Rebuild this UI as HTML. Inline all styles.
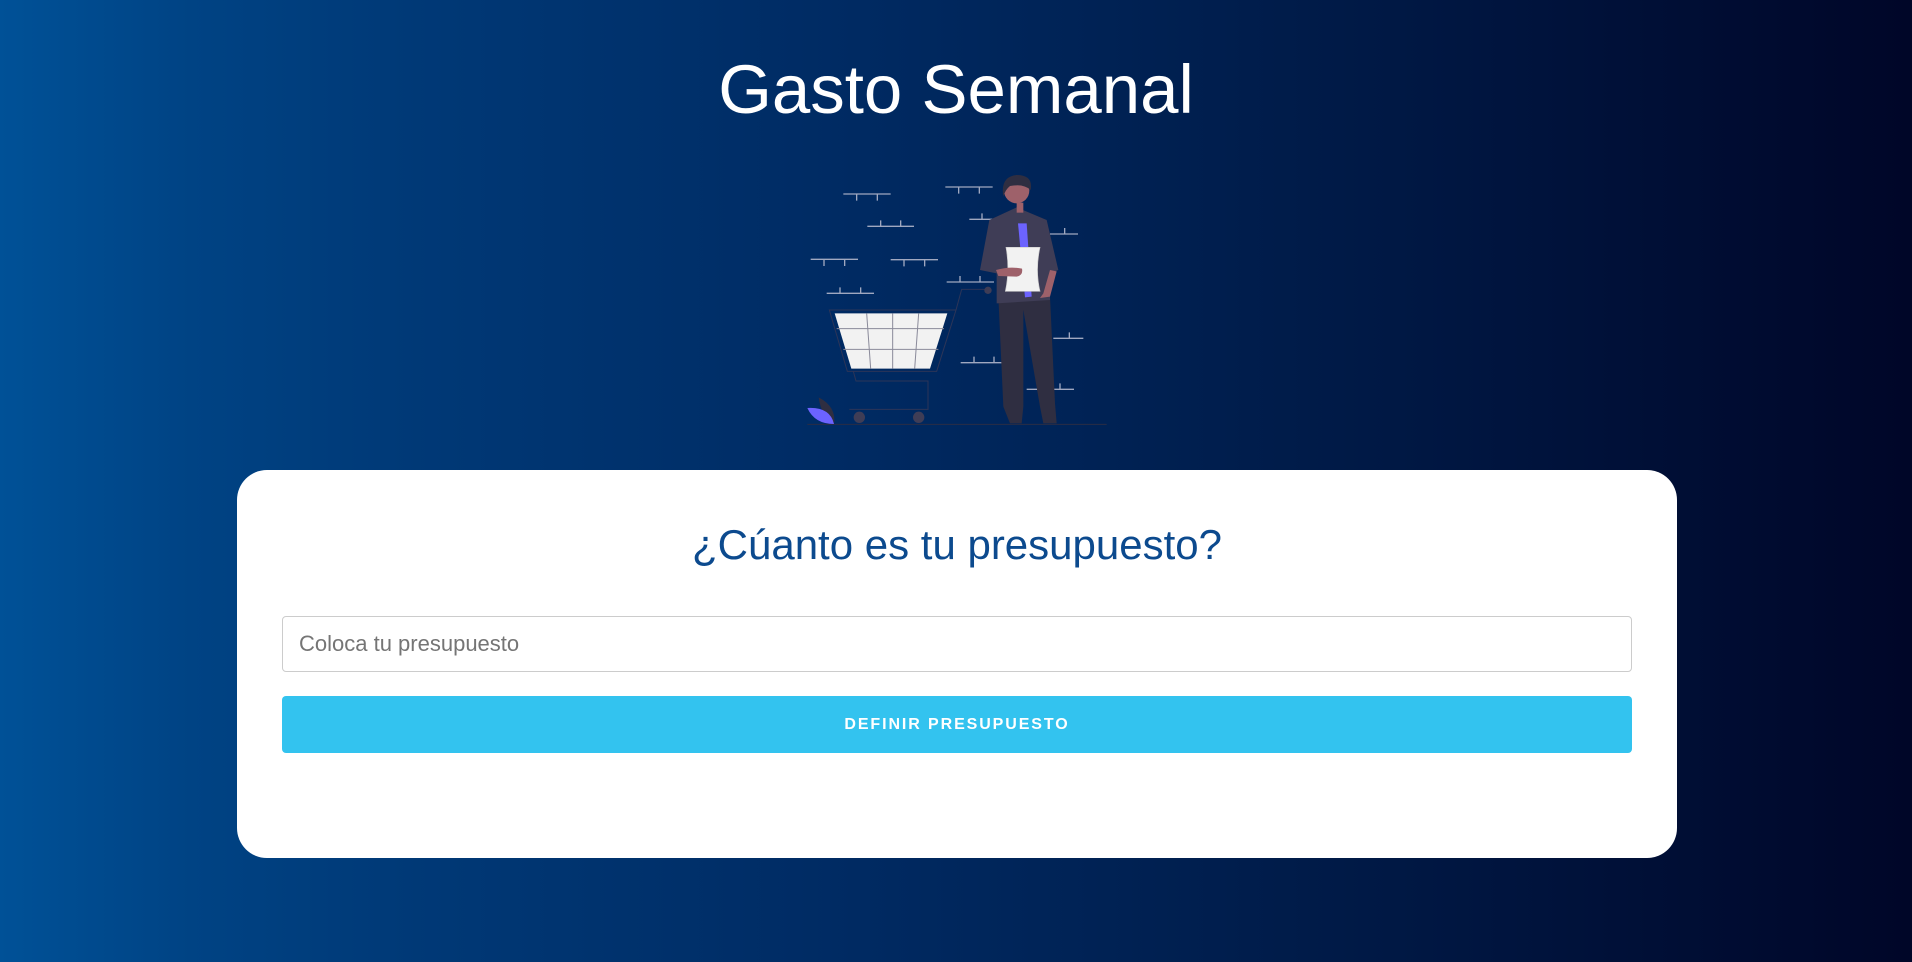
<!DOCTYPE html>
<html><head><meta charset="utf-8"><style>
html,body{margin:0;padding:0;width:1912px;height:962px;overflow:hidden}
body{background:linear-gradient(90deg,#005197 0%,#004384 10%,#003a78 20%,#002a62 45%,#001a47 70%,#000628 100%);font-family:"Liberation Sans",Arial,sans-serif;position:relative}
h1{position:absolute;left:0;right:0;top:42px;margin:0;text-align:center;color:#fff;font-weight:400;font-size:69px;line-height:96px}
svg.il{position:absolute;left:790px;top:160px}
.card{position:absolute;left:237px;top:470px;width:1440px;height:388px;background:#fff;border-radius:30px}
.card h2{margin:0;position:absolute;top:47px;left:0;right:0;text-align:center;color:#0c4a8e;font-weight:400;font-size:42px;line-height:56px}
.inp{position:absolute;left:45px;top:146px;width:1348px;height:54px;border:1px solid #ccc;border-radius:4px;box-sizing:content-box}
.inp span{position:absolute;left:16px;top:14px;font-size:22px;color:#757575}
.btn{position:absolute;left:45px;top:226px;width:1350px;height:57px;background:#33c3ef;border-radius:4px;color:#fff;font-weight:700;font-size:16px;letter-spacing:1.9px;text-align:center;line-height:57px}
</style></head><body>
<h1>Gasto Semanal</h1>
<svg class="il" width="340" height="280" viewBox="0 0 1020 840">
<g stroke="#a0a8c0" stroke-width="4" fill="none">
<path d="M160 102H302M200 102v20M262 102v20"/>
<path d="M232 199H372M272 199v-18M332 199v-18"/>
<path d="M62 298H204M102 298v20M164 298v20"/>
<path d="M302 299H444M342 299v20M404 299v20"/>
<path d="M110 400H252M150 400v-18M212 400v-18"/>
<path d="M466 81H608M506 81v20M568 81v20"/>
<path d="M538 178H610M576 178v-18"/>
<path d="M780 222H864M824 222v-18"/>
<path d="M470 366H612M510 366v-18M570 366v-18"/>
<path d="M790 535H880M838 535v-18"/>
<path d="M512 608H640M552 608v-18M612 608v-18"/>
<path d="M710 688H852M810 688v-18"/>
</g>
<path d="M52 793H950" stroke="#2a2d45" stroke-width="3"/>
<g stroke="#2c3558" stroke-width="3" fill="none">
<path d="M118 450H498L440 634H172Z"/>
<path d="M498 450L515 388H594"/>
<path d="M190 634L198 663H414V748H178"/>
</g>
<path d="M134 460H472L420 626H184Z" fill="#f2f2f2"/>
<g stroke="#8a8a9a" stroke-width="3"><path d="M140 506H462M160 568H445M230 460L242 626M308 460V626M386 460L374 626"/></g>
<circle cx="594" cy="391" r="11" fill="#3f3d56"/>
<circle cx="208" cy="772" r="17" fill="#3f3d56"/><circle cx="386" cy="772" r="17" fill="#3f3d56"/>
<path d="M86 712Q140 740 132 792Q94 770 86 712Z" fill="#2f2e41"/>
<path d="M52 744Q120 740 132 792Q74 792 52 744Z" fill="#6c63ff"/>
<path d="M625 410L640 740L660 790H695L700 740L700 450L750 740L760 790H800L795 730L780 410Z" fill="#2f2e41"/>
<path d="M598 180L680 142L770 180L805 330L780 340L780 420L620 430L620 340L570 330Z" fill="#3f3d56"/>
<path d="M684 190L710 190L725 410L705 412Z" fill="#6c63ff"/>
<circle cx="680" cy="92" r="38" fill="#9e616a"/>
<path d="M640 110Q630 50 680 45Q730 45 722 90Q700 70 660 78Q645 90 640 110Z" fill="#2f2e41"/>
<path d="M680 128h20v30h-20z" fill="#9e616a"/>
<path d="M648 262H750Q735 330 750 394H646Q660 330 648 262Z" fill="#f2f2f2" stroke="#ccc" stroke-width="2"/>
<path d="M618 330Q660 318 696 326Q700 346 680 350L625 348Z" fill="#9e616a"/>
<path d="M780 330L800 334L780 410L750 414L760 400Z" fill="#9e616a"/>
</svg>
<div class="card">
<h2>¿Cúanto es tu presupuesto?</h2>
<div class="inp"><span>Coloca tu presupuesto</span></div>
<div class="btn">DEFINIR PRESUPUESTO</div>
</div>
</body></html>
